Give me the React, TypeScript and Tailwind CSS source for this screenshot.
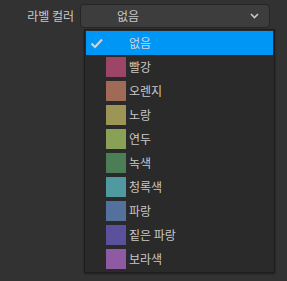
const colors = [
  { name: "빨강", color: "bg-[#9c4566]" },
  { name: "오렌지", color: "bg-[#a06a56]" },
  { name: "노랑", color: "bg-[#9c9556]" },
  { name: "연두", color: "bg-[#89a057]" },
  { name: "녹색", color: "bg-[#4b7e57]" },
  { name: "청록색", color: "bg-[#4e9aa0]" },
  { name: "파랑", color: "bg-[#53719b]" },
  { name: "짙은 파랑", color: "bg-[#5b509b]" },
  { name: "보라색", color: "bg-[#8e5aa1]" },
];

function App() {
  return (
    <div
      className="w-[287px] h-[281px] bg-[#323232] text-[12px] text-[#c8c8c8] pt-[4px]"
      style={{ fontFamily: '"Noto Sans CJK KR", "Noto Sans", sans-serif' }}
    >
      <div className="flex items-center">
        <div className="w-[80px] text-right pr-[6px] leading-[24px]">라벨 컬러</div>
        <div className="w-[190px] h-[24px] rounded-[4px] bg-[#3d3d3d] border border-[#252525] flex items-center pl-[36px] pr-[10px]">
          <span className="flex-1">없음</span>
          <svg width="9" height="6" viewBox="0 0 9 6" fill="none" stroke="#c8c8c8" strokeWidth="1.6">
            <path d="M1 1l3.5 3.5L8 1" />
          </svg>
        </div>
      </div>
      <div className="ml-[84px] mt-[1px] w-[191px] border border-[#1e1e1e] bg-[#2a2a2a] shadow-[0_1px_2px_rgba(0,0,0,0.4)] p-[1px]">
        <div className="h-[24px] bg-[#0096f5] flex items-center">
          <div className="w-[20px] flex justify-center">
            <svg width="13" height="11" viewBox="0 0 13 11" fill="none" stroke="#d2d2d2" strokeWidth="2.2">
              <path d="M1.5 5.5l3.5 3.5L12 1.5" />
            </svg>
          </div>
          <span className="ml-[23px] text-[#d4d4d4]">없음</span>
        </div>
        {colors.map((c) => (
          <div key={c.name} className="h-[24px] flex items-center">
            <div className={`w-[20px] h-[20px] ml-[20px] ${c.color}`} />
            <span className="ml-[3px]">{c.name}</span>
          </div>
        ))}
      </div>
    </div>
  );
}

export default App;
